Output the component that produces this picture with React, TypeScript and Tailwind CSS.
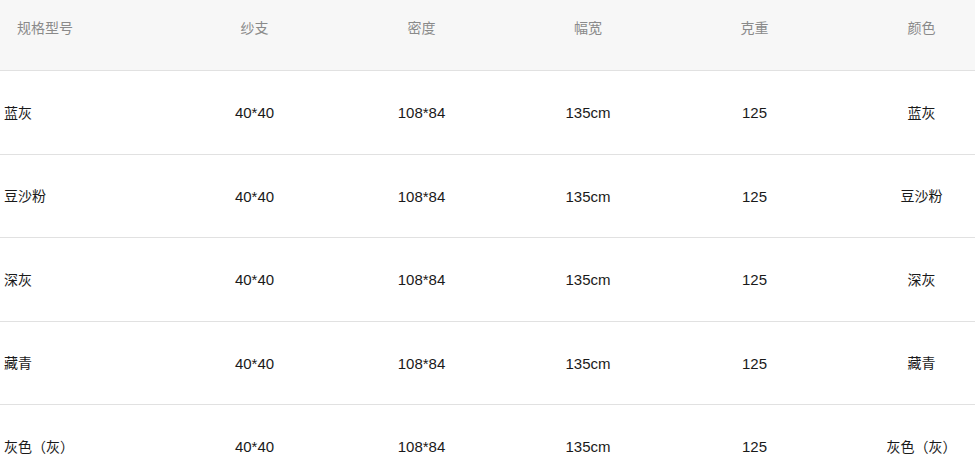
import React from "react";

const headers = ["规格型号", "纱支", "密度", "幅宽", "克重", "颜色"];
const rows = [
  ["蓝灰", "40*40", "108*84", "135cm", "125", "蓝灰"],
  ["豆沙粉", "40*40", "108*84", "135cm", "125", "豆沙粉"],
  ["深灰", "40*40", "108*84", "135cm", "125", "深灰"],
  ["藏青", "40*40", "108*84", "135cm", "125", "藏青"],
  ["灰色（灰）", "40*40", "108*84", "135cm", "125", "灰色（灰）"],
];
const heights = ["h-[83px]", "h-[82px]", "h-[83px]", "h-[82px]", "h-[83px]"];

export default function App() {
  return (
    <div
      className="w-[975px] h-[466px] overflow-hidden bg-white text-[14px]"
      style={{ fontFamily: '"Liberation Sans", "Noto Sans CJK SC", sans-serif' }}
    >
      <div className="w-[1005px]">
        <div className="grid grid-cols-[171px_167px_167px_166px_167px_167px] h-[71px] bg-[#f7f7f7] border-b border-[#e1e1e1] text-[#8a8a8a]">
          {headers.map((h, i) => (
            <div
              key={i}
              className={`pt-[18px] leading-[20px] ${i === 0 ? "pl-[17px]" : "text-center"}`}
            >
              {h}
            </div>
          ))}
        </div>
        {rows.map((r, ri) => (
          <div
            key={ri}
            className={`grid grid-cols-[171px_167px_167px_166px_167px_167px] items-center border-b border-[#e1e1e1] text-[#1a1a1a] box-content ${heights[ri]}`}
          >
            {r.map((c, i) => (
              <div
                key={i}
                className={
                  i === 0
                    ? "pl-[4px] pt-[1px]"
                    : i === 5
                    ? "text-center pt-[1px]"
                    : "text-center text-[15px] leading-[20px] pt-[1px]"
                }
              >
                {c}
              </div>
            ))}
          </div>
        ))}
      </div>
    </div>
  );
}
